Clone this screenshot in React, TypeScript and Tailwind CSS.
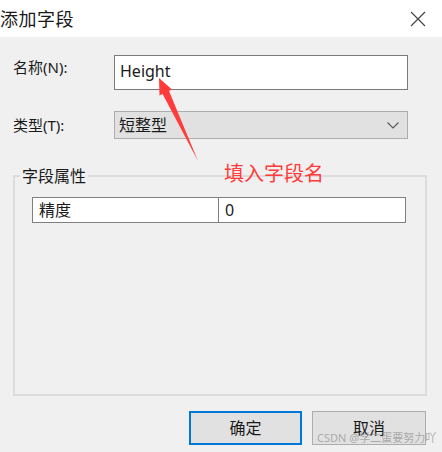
import React from "react";

const font = "font-['Noto_Sans','Noto_Sans_CJK_SC',sans-serif]";

const App: React.FC = () => {
  return (
    <div className={`relative w-[442px] h-[452px] overflow-hidden bg-[#f0f0f0] text-[#1a1a1a] ${font}`}>
      {/* title bar */}
      <div className="flex h-[37px] items-center justify-between bg-white">
        <span className="text-[18px] leading-none tracking-[0.5px]">添加字段</span>
        <svg width="16" height="16" viewBox="0 0 16 16" className="mr-[16px]">
          <path d="M1 1 L15 15 M15 1 L1 15" stroke="#444" strokeWidth="1.2" />
        </svg>
      </div>

      <div className="flex flex-col px-[13px]">
        {/* name */}
        <div className="mt-[18px] flex items-center">
          <label className="w-[101px] text-[15px] leading-none self-start pt-[5px]">名称(N):</label>
          <div className="flex h-[35px] w-[294px] items-center border border-[#7a7a7a] bg-white px-[5px] pb-[4px] text-[16px]">
            Height
          </div>
        </div>

        {/* type */}
        <div className="mt-[21px] flex items-center">
          <label className="w-[101px] text-[15px] leading-none">类型(T):</label>
          <div className="flex h-[28px] w-[294px] items-center justify-between border border-[#adadad] bg-[#e1e1e1] pl-[4px] pr-[8px] text-[16px]">
            <span>短整型</span>
            <svg width="12" height="7" viewBox="0 0 12 7">
              <path d="M0.5 0.5 L6 6 L11.5 0.5" fill="none" stroke="#555" strokeWidth="1.1" />
            </svg>
          </div>
        </div>

        {/* group box */}
        <div className="relative mt-[36px] h-[221px] w-[414px] border-2 border-[#dcdcdc]">
          <span className="absolute left-[5px] top-[-12px] bg-[#f0f0f0] px-[2px] text-[16px] leading-[22px]">
            字段属性
          </span>
          <div className="ml-[17px] mt-[20px] flex h-[26px] w-[374px] border border-[#7f7f7f] bg-white text-[16px]">
            <div className="flex w-[186px] items-center border-r border-[#7f7f7f] pl-[6px]">精度</div>
            <div className="flex flex-1 items-center pl-[6px]">0</div>
          </div>
        </div>

        {/* buttons */}
        <div className="mt-[15px] flex justify-end gap-[10px] pr-[3px]">
          <button className="h-[34px] w-[113px] border-2 border-[#0078d7] bg-[#e1e1e1] text-[16px]">确定</button>
          <button className="h-[34px] w-[114px] border border-[#adadad] bg-[#e1e1e1] text-[16px]">取消</button>
        </div>
      </div>

      {/* annotation */}
      <svg className="absolute left-0 top-0" width="442" height="452" viewBox="0 0 442 452">
        <polygon
          points="159,78 172,89.5 169,91 198,161 162.6,94 159.5,95.5"
          fill="#ff3b3b"
        />
      </svg>
      <span className="absolute left-[224px] top-[160px] text-[20px] leading-[28px] text-[#ff3b3b]">
        填入字段名
      </span>
      <span className="absolute left-[317px] top-[431px] whitespace-nowrap text-[11px] leading-[14px] text-[#9a9a9a]/80">
        CSDN @学二蛋要努力吖
      </span>
    </div>
  );
};

export default App;
